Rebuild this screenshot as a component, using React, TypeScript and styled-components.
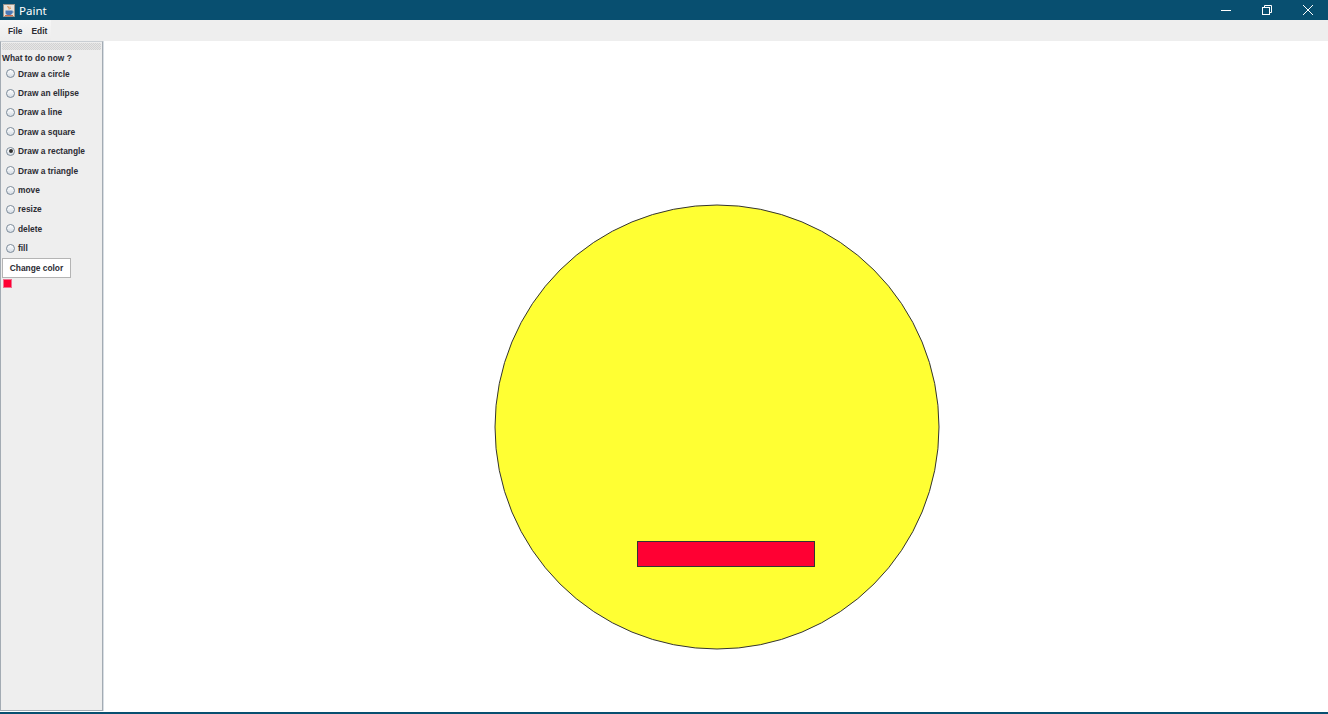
import React from "react";
import styled, { createGlobalStyle } from "styled-components";

const GlobalStyle = createGlobalStyle`
  html, body { margin: 0; padding: 0; overflow: hidden; }
  body { font-family: "Liberation Sans", Arial, sans-serif; }
`;

const Window = styled.div`
  width: 1328px;
  height: 714px;
  display: flex;
  flex-direction: column;
  background: #ffffff;
`;

const TitleBar = styled.div`
  height: 20px;
  flex: 0 0 20px;
  background: #084f70;
  display: flex;
  align-items: center;
  color: #ffffff;
`;

const TitleIcon = styled.div`
  width: 12px;
  height: 13px;
  margin-left: 3px;
  margin-right: 4px;
  display: flex;
`;

const TitleText = styled.span`
  font-family: "Segoe UI", "Noto Sans", "Liberation Sans", sans-serif;
  font-size: 11.5px;
  flex: 1;
`;

const WinButton = styled.div`
  width: 41px;
  height: 20px;
  display: flex;
  align-items: center;
  justify-content: center;
`;

const MenuBar = styled.div`
  height: 21px;
  flex: 0 0 21px;
  background: #eeeeee;
  display: flex;
  align-items: stretch;
`;

const MenuGroup = styled.div`
  display: flex;
  align-items: center;
  padding-left: 3px;
  padding-right: 4px;
  gap: 9px;
  background: linear-gradient(#f6f6f6, #ececec);
`;

const MenuItem = styled.span`
  font-size: 8.4px;
  font-weight: bold;
  color: #2c2c33;
  padding-left: 5px;
  & + & { padding-left: 0; }
`;

const Body = styled.div`
  flex: 1;
  display: flex;
  min-height: 0;
`;

const SidePanel = styled.div`
  width: 101px;
  flex: 0 0 101px;
  background: #eeeeee;
  border: 1px solid #a3abb3;
  border-top: 1px solid #c9ced3;
  margin-bottom: 1px;
  display: flex;
  flex-direction: column;
  align-items: flex-start;
  box-shadow: 1px 0 0 #d8dee4;
`;

const Grip = styled.div`
  align-self: stretch;
  height: 7px;
  margin: 1px 1px 0 1px;
  background-color: #e6e6e6;
  background-image:
    linear-gradient(45deg, #d2d2d2 25%, transparent 25%, transparent 75%, #d2d2d2 75%),
    linear-gradient(45deg, #d2d2d2 25%, transparent 25%, transparent 75%, #d2d2d2 75%);
  background-size: 2px 2px;
  background-position: 0 0, 1px 1px;
`;

const PanelLabel = styled.div`
  font-size: 8.4px;
  font-weight: bold;
  color: #2c2c33;
  margin: 2px 0 0 1px;
  height: 12px;
  line-height: 12px;
`;

const RadioRow = styled.label`
  display: flex;
  align-items: center;
  height: 19.4px;
  padding-left: 5px;
  font-size: 8.4px;
  font-weight: bold;
  color: #2c2c33;
`;

const RadioCircle = styled.span<{ $checked?: boolean }>`
  width: 7px;
  height: 7px;
  border-radius: 50%;
  border: 1px solid #7b8a99;
  background: linear-gradient(#ffffff, #d6dde5);
  margin-right: 3px;
  display: flex;
  align-items: center;
  justify-content: center;
  &::after {
    content: "";
    width: 4px;
    height: 4px;
    border-radius: 50%;
    background: #333;
    display: ${(p) => (p.$checked ? "block" : "none")};
  }
`;

const ColorButton = styled.div`
  margin: 0 0 0 1px;
  width: 67px;
  height: 18px;
  background: #ffffff;
  border: 1px solid #b4b4b4;
  display: flex;
  align-items: center;
  justify-content: center;
  font-size: 8.4px;
  font-weight: bold;
  color: #2c2c33;
`;

const Swatch = styled.div<{ $color: string }>`
  width: 7px;
  height: 7px;
  margin: 1px 0 0 2px;
  background: ${(p) => p.$color};
  border: 1px solid #f07090;
`;

const Canvas = styled.div`
  flex: 1;
  background: #ffffff;
  margin-left: 1px;
`;

const BottomEdge = styled.div`
  height: 2px;
  flex: 0 0 2px;
  background: #084f70;
`;

const options = [
  "Draw a circle",
  "Draw an ellipse",
  "Draw a line",
  "Draw a square",
  "Draw a rectangle",
  "Draw a triangle",
  "move",
  "resize",
  "delete",
  "fill",
];

export default function App() {
  return (
    <>
      <GlobalStyle />
      <Window>
        <TitleBar>
          <TitleIcon>
            <svg width="12" height="13" viewBox="0 0 12 13">
              <rect x="0" y="0" width="12" height="13" fill="#e8e4dc" />
              <rect x="0.5" y="0.5" width="11" height="12" fill="none" stroke="#9a948a" />
              <path d="M5 2 C4 3.5 7 4 6 5.5" stroke="#d9792b" strokeWidth="1" fill="none" />
              <path d="M7 2.5 C6.2 3.5 8 4 7.4 5" stroke="#d9792b" strokeWidth="0.8" fill="none" />
              <path d="M2.5 6.5 H9 V9 C9 10.5 8 11 6 11 C4 11 2.5 10.5 2.5 9 Z" fill="#4a78b5" />
              <path d="M9 7 C10.5 7 10.5 9 9 9" stroke="#4a78b5" fill="none" />
              <rect x="2" y="11.2" width="8" height="0.9" fill="#c2502a" />
            </svg>
          </TitleIcon>
          <TitleText>Paint</TitleText>
          <WinButton>
            <svg width="10" height="10" viewBox="0 0 10 10">
              <path d="M0 5.5 H10" stroke="#fff" strokeWidth="1" />
            </svg>
          </WinButton>
          <WinButton>
            <svg width="10" height="10" viewBox="0 0 10 10">
              <rect x="0.5" y="2.5" width="7" height="7" fill="none" stroke="#fff" />
              <path d="M2.5 2.5 V0.5 H9.5 V7.5 H7.5" fill="none" stroke="#fff" />
            </svg>
          </WinButton>
          <WinButton>
            <svg width="10" height="10" viewBox="0 0 10 10">
              <path d="M0 0 L10 10 M10 0 L0 10" stroke="#fff" strokeWidth="1" />
            </svg>
          </WinButton>
        </TitleBar>
        <MenuBar>
          <MenuGroup>
            <MenuItem>File</MenuItem>
            <MenuItem>Edit</MenuItem>
          </MenuGroup>
        </MenuBar>
        <Body>
          <SidePanel>
            <Grip />
            <PanelLabel>What to do now ?</PanelLabel>
            {options.map((o) => (
              <RadioRow key={o}>
                <RadioCircle $checked={o === "Draw a rectangle"} />
                {o}
              </RadioRow>
            ))}
            <ColorButton>Change color</ColorButton>
            <Swatch $color="#ff0033" />
          </SidePanel>
          <Canvas>
            <svg width="100%" height="100%">
              <circle cx="613" cy="386" r="222" fill="#ffff33" stroke="#333" strokeWidth="1" />
              <rect x="533.5" y="500.5" width="177" height="25" fill="#ff0033" stroke="#333" strokeWidth="1" />
            </svg>
          </Canvas>
        </Body>
        <BottomEdge />
      </Window>
    </>
  );
}
